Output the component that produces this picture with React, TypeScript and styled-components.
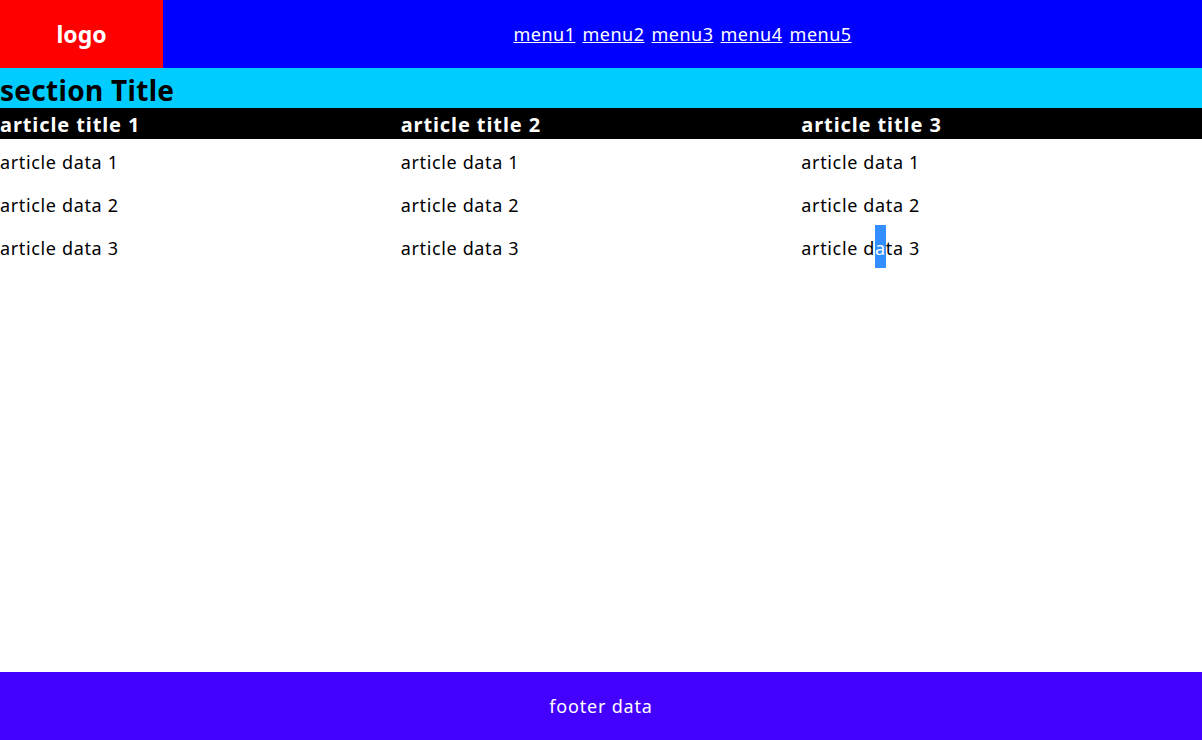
import React from "react";
import styled, { createGlobalStyle } from "styled-components";

const GlobalStyle = createGlobalStyle`
  html, body {
    margin: 0;
    padding: 0;
  }
  body {
    font-family: "Noto Sans", "Noto Sans CJK KR", sans-serif;
    background: #fff;
    color: #000;
  }
`;

const Page = styled.div`
  display: flex;
  flex-direction: column;
  min-height: 100vh;
`;

const Header = styled.header`
  display: flex;
  height: 68px;
`;

const Logo = styled.div`
  width: 163px;
  background: #ff0000;
  color: #fff;
  font-size: 23px;
  font-weight: bold;
  display: flex;
  align-items: center;
  justify-content: center;
`;

const Nav = styled.nav`
  flex: 1;
  background: #0000ff;
  display: flex;
  align-items: center;
  justify-content: center;
  gap: 7px;
`;

const MenuLink = styled.a`
  color: #fff;
  font-size: 18px;
  letter-spacing: 0.5px;
  text-decoration: underline;
`;

const Section = styled.section`
  flex: 1;
  display: flex;
  flex-direction: column;
`;

const SectionTitle = styled.h2`
  margin: 0;
  height: 40px;
  line-height: 44px;
  background: #00ccff;
  font-size: 28px;
  letter-spacing: 0.3px;
  font-weight: bold;
`;

const Articles = styled.div`
  display: grid;
  grid-template-columns: repeat(3, 1fr);
`;

const Article = styled.article`
  display: flex;
  flex-direction: column;
`;

const ArticleTitle = styled.h3`
  margin: 0;
  height: 31px;
  line-height: 33px;
  background: #000;
  color: #fff;
  font-size: 20px;
  letter-spacing: 0.9px;
  font-weight: bold;
`;

const DataList = styled.div`
  display: flex;
  flex-direction: column;
  gap: 17px;
  padding-top: 10px;
`;

const Data = styled.p`
  margin: 0;
  font-size: 18px;
  letter-spacing: 0.65px;
  line-height: 26px;
`;

/* text selection shown in the screenshot: it covers the whole line height */
const Selected = styled.span`
  background: #338fff;
  color: #fff;
  padding: 11px 0 8px;
`;

const Footer = styled.footer`
  height: 68px;
  background: #4400ff;
  color: #fff;
  font-size: 18px;
  letter-spacing: 0.8px;
  display: flex;
  align-items: center;
  justify-content: center;
`;

const menus = ["menu1", "menu2", "menu3", "menu4", "menu5"];

export default function App() {
  return (
    <>
      <GlobalStyle />
      <Page>
        <Header>
          <Logo>logo</Logo>
          <Nav>
            {menus.map((m) => (
              <MenuLink key={m} href="#">
                {m}
              </MenuLink>
            ))}
          </Nav>
        </Header>
        <Section>
          <SectionTitle>section Title</SectionTitle>
          <Articles>
            {[1, 2, 3].map((n) => (
              <Article key={n}>
                <ArticleTitle>article title {n}</ArticleTitle>
                <DataList>
                  <Data>article data 1</Data>
                  <Data>article data 2</Data>
                  {n === 3 ? (
                    <Data>
                      article d<Selected>a</Selected>ta 3
                    </Data>
                  ) : (
                    <Data>article data 3</Data>
                  )}
                </DataList>
              </Article>
            ))}
          </Articles>
        </Section>
        <Footer>footer data</Footer>
      </Page>
    </>
  );
}
